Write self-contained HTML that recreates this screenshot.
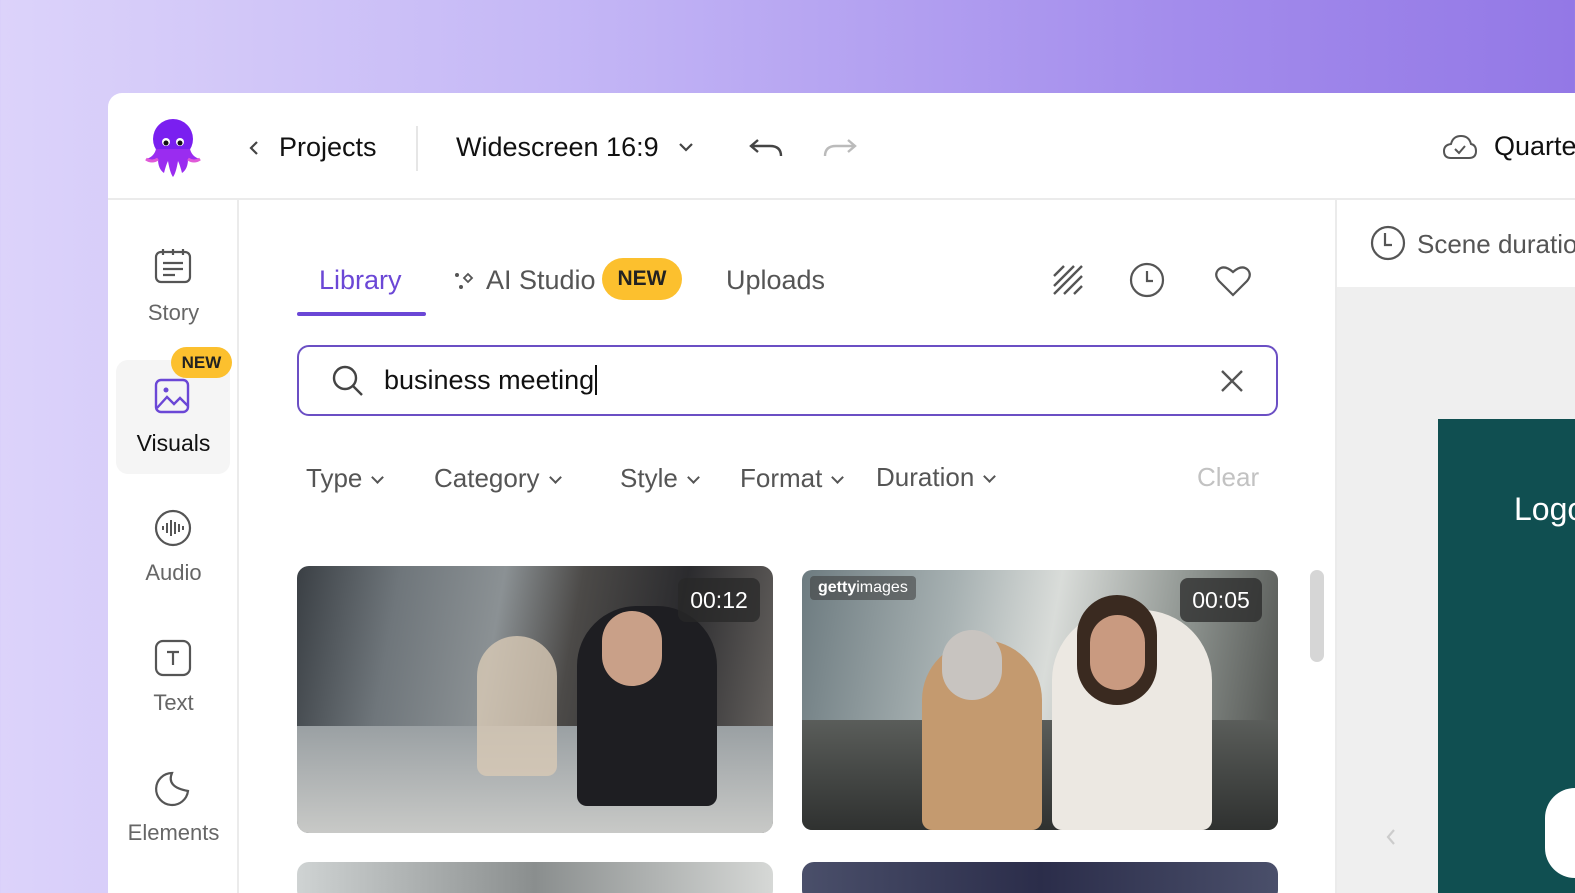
<!DOCTYPE html>
<html><head><style>
*{margin:0;padding:0;box-sizing:border-box}
body{width:1575px;height:880px;overflow:hidden;font-family:"Liberation Sans",sans-serif;background:linear-gradient(90deg,#dcd3fa 0%,#c5b8f6 35%,#a38cec 75%,#9378e6 100%);position:relative}
.win{position:absolute;left:108px;top:93px;width:1480px;height:800px;background:#fff;border-top-left-radius:14px;overflow:hidden}
.abs{position:absolute}
.t{position:absolute;white-space:nowrap}
.side{left:0;top:106px;width:131px;height:700px;border-right:2px solid #ebebeb}
.lbl{font-size:22px;color:#666;text-align:center;width:131px;left:0}
.chip{font-size:26px;color:#555}
.chev{display:inline-block;width:9px;height:9px;border-right:2px solid #555;border-bottom:2px solid #555;transform:rotate(45deg);margin-left:11px;position:relative;top:-5px}
</style></head><body>
<div class="win">
 <div class="abs" style="left:0;top:105px;width:1480px;height:2px;background:#ebebeb"></div>
 <svg class="abs" style="left:34px;top:22px" width="62" height="64" viewBox="0 0 62 64">
  <ellipse cx="31" cy="24" rx="20" ry="20" fill="#7a1ff0"/>
  <path d="M4 44 Q12 42 14 34 L48 34 Q50 42 58 44 Q50 48 46 44 Q46 54 40 58 Q38 50 36 46 Q34 58 31 62 Q28 58 26 46 Q24 50 22 58 Q16 54 16 44 Q12 48 4 44Z" fill="#9a2cf0"/>
  <path d="M4 44 Q10 48 16 44 M46 44 Q52 48 58 44" stroke="#e05ad8" stroke-width="3" fill="none"/>
  <circle cx="24" cy="27" r="4" fill="#fff"/><circle cx="38" cy="27" r="4" fill="#fff"/>
  <circle cx="24" cy="28" r="2.5" fill="#111"/><circle cx="38" cy="28" r="2.5" fill="#111"/>
 </svg>
 <svg class="abs" style="left:140px;top:47px" width="12" height="16"><path d="M9 2 L3 8 L9 14" stroke="#444" stroke-width="2.2" fill="none"/></svg>
 <div class="t" style="left:171px;top:39px;font-size:27px;color:#111">Projects</div>
 <div class="abs" style="left:308px;top:33px;width:2px;height:45px;background:#e6e6e6"></div>
 <div class="t" style="left:348px;top:39px;font-size:27px;color:#111">Widescreen 16:9</div>
 <svg class="abs" style="left:570px;top:49px" width="16" height="12"><path d="M2 2 L8 8 L14 2" stroke="#444" stroke-width="2.2" fill="none"/></svg>
 <svg class="abs" style="left:640px;top:43px" width="36" height="24"><path d="M10 4 L3 10 L10 16 M3 10 H22 Q33 10 33 20" stroke="#444" stroke-width="2.4" fill="none"/></svg>
 <svg class="abs" style="left:714px;top:43px" width="36" height="24"><path d="M26 4 L33 10 L26 16 M33 10 H14 Q3 10 3 20" stroke="#bbb" stroke-width="2.4" fill="none"/></svg>
 <svg class="abs" style="left:1334px;top:39px" width="36" height="30"><path d="M9 26 Q2 26 2 19 Q2 13 9 12 Q11 4 19 4 Q27 4 29 12 Q34 13 34 19 Q34 26 27 26Z" stroke="#555" stroke-width="2" fill="none"/><path d="M13 17 L17 21 L23 14" stroke="#555" stroke-width="2" fill="none"/></svg>
 <div class="t" style="left:1386px;top:38px;font-size:27px;color:#111">Quarterly</div>

 <div class="abs side"></div>
 <svg class="abs" style="left:46px;top:155px" width="38" height="36" viewBox="0 0 38 36"><rect x="2" y="4" width="34" height="30" rx="5" stroke="#555" stroke-width="2.2" fill="none"/><path d="M9 1v6M19 1v6M29 1v6M9 15h20M9 21h20M9 27h12" stroke="#555" stroke-width="2.2"/></svg>
 <div class="t lbl" style="top:207px">Story</div>
 <div class="abs" style="left:8px;top:267px;width:114px;height:114px;background:#f5f5f5;border-radius:12px"></div>
 <div class="abs" style="left:63px;top:254px;width:61px;height:31px;background:#fcc02e;border-radius:16px;font-size:17px;font-weight:bold;color:#222;text-align:center;line-height:31px">NEW</div>
 <svg class="abs" style="left:46px;top:285px" width="36" height="36"><rect x="2" y="2" width="32" height="32" rx="5" stroke="#6b47d6" stroke-width="2.4" fill="none"/><circle cx="12" cy="12" r="2.5" fill="#6b47d6"/><path d="M3 30 L13 19 L20 26 L26 20 L34 28" stroke="#6b47d6" stroke-width="2.4" fill="none"/></svg>
 <div class="t lbl" style="top:337px;color:#111;font-size:23px">Visuals</div>
 <svg class="abs" style="left:46px;top:416px" width="38" height="38"><circle cx="19" cy="19" r="17" stroke="#555" stroke-width="2.2" fill="none"/><path d="M9 17v4M13 14v10M17 11v16M21 13v12M25 15v8M29 17v4" stroke="#555" stroke-width="2"/></svg>
 <div class="t lbl" style="top:467px">Audio</div>
 <svg class="abs" style="left:46px;top:546px" width="38" height="38"><rect x="2" y="2" width="34" height="34" rx="7" stroke="#555" stroke-width="2.2" fill="none"/><path d="M13 13h12M19 13v13" stroke="#555" stroke-width="2.2"/></svg>
 <div class="t lbl" style="top:597px">Text</div>
 <svg class="abs" style="left:46px;top:676px" width="38" height="38"><path d="M34 22 A16 16 0 1 1 18 4 Q12 18 34 22Z" stroke="#555" stroke-width="2.2" fill="none"/></svg>
 <div class="t lbl" style="top:727px">Elements</div>

 <div class="t" style="left:211px;top:172px;font-size:27px;color:#6b47d6">Library</div>
 <div class="abs" style="left:189px;top:219px;width:129px;height:4px;background:#6b47d6;border-radius:2px"></div>
 <svg class="abs" style="left:345px;top:177px" width="22" height="22"><circle cx="4" cy="5" r="2" fill="#555"/><path d="M15 4 L19 8 L15 12 L11 8Z" stroke="#555" stroke-width="1.8" fill="none"/><circle cx="8" cy="17" r="2" fill="#555"/></svg>
 <div class="t" style="left:378px;top:172px;font-size:27px;color:#555">AI Studio</div>
 <div class="abs" style="left:494px;top:165px;width:80px;height:42px;background:#fcc02e;border-radius:21px;font-size:21px;font-weight:bold;color:#222;text-align:center;line-height:42px">NEW</div>
 <div class="t" style="left:618px;top:172px;font-size:27px;color:#555">Uploads</div>
 <svg class="abs" style="left:944px;top:171px" width="32" height="32"><path d="M2 12 L12 2 M2 22 L22 2 M2 30 L30 2 M12 30 L30 12 M22 30 L30 22" stroke="#555" stroke-width="2.4"/></svg>
 <svg class="abs" style="left:1021px;top:169px" width="36" height="36"><circle cx="18" cy="18" r="16" stroke="#555" stroke-width="2.2" fill="none"/><path d="M18 9v10h6" stroke="#555" stroke-width="2.2" fill="none"/></svg>
 <svg class="abs" style="left:1106px;top:171px" width="38" height="34"><path d="M19 31 L5 17 Q0 11 4 6 Q10 0 19 8 Q28 0 34 6 Q38 11 33 17Z" stroke="#555" stroke-width="2.2" fill="none"/></svg>

 <div class="abs" style="left:189px;top:252px;width:981px;height:71px;border:2px solid #6b4fc4;border-radius:12px"></div>
 <svg class="abs" style="left:224px;top:272px" width="32" height="32"><circle cx="13" cy="13" r="11" stroke="#444" stroke-width="2.4" fill="none"/><path d="M21 21 L30 30" stroke="#444" stroke-width="2.4"/></svg>
 <div class="t" style="left:276px;top:272px;font-size:27px;color:#111">business meeting<span style="border-left:2px solid #111;margin-left:1px"></span></div>
 <svg class="abs" style="left:1112px;top:276px" width="24" height="24"><path d="M2 2 L22 22 M22 2 L2 22" stroke="#555" stroke-width="2.4"/></svg>

 <div class="t chip" style="left:198px;top:370px">Type<span class="chev"></span></div>
 <div class="t chip" style="left:326px;top:370px">Category<span class="chev"></span></div>
 <div class="t chip" style="left:512px;top:370px">Style<span class="chev"></span></div>
 <div class="t chip" style="left:632px;top:370px">Format<span class="chev"></span></div>
 <div class="t chip" style="left:768px;top:369px">Duration<span class="chev"></span></div>
 <div class="t chip" style="left:1089px;top:369px;color:#c2c2c2">Clear</div>

 <div class="abs" style="left:189px;top:473px;width:476px;height:267px;border-radius:12px;overflow:hidden;background:linear-gradient(100deg,#3a3f44 0%,#6f767b 20%,#8b9194 40%,#4c4a48 55%,#2b2b2e 75%,#6e6a66 100%)">
  <div class="abs" style="left:0;top:160px;width:476px;height:107px;background:linear-gradient(180deg,#9aa0a3,#c8c9c7)"></div>
  <div class="abs" style="left:180px;top:70px;width:80px;height:140px;background:#d8c9b5;border-radius:40px 40px 10px 10px;opacity:.8"></div>
  <div class="abs" style="left:280px;top:40px;width:140px;height:200px;background:#1e1e22;border-radius:60px 60px 10px 10px"></div>
  <div class="abs" style="left:305px;top:45px;width:60px;height:75px;background:#c9a088;border-radius:30px"></div>
  <div class="abs" style="left:381px;top:12px;width:82px;height:44px;background:rgba(40,40,40,.75);border-radius:8px;color:#fff;font-size:23px;text-align:center;line-height:44px">00:12</div>
 </div>
 <div class="abs" style="left:694px;top:477px;width:476px;height:260px;border-radius:10px;overflow:hidden;background:linear-gradient(100deg,#6d7b80 0%,#a7b1b2 30%,#d9dcd9 50%,#8f9591 75%,#4a4c49 100%)">
  <div class="abs" style="left:0;top:150px;width:476px;height:110px;background:linear-gradient(180deg,#5a5d5a,#2f3130)"></div>
  <div class="abs" style="left:120px;top:70px;width:120px;height:190px;background:#c49a6f;border-radius:60px 60px 10px 10px"></div>
  <div class="abs" style="left:140px;top:60px;width:60px;height:70px;background:#c8c4c0;border-radius:30px"></div>
  <div class="abs" style="left:250px;top:40px;width:160px;height:220px;background:#ece8e2;border-radius:70px 70px 10px 10px"></div>
  <div class="abs" style="left:275px;top:25px;width:80px;height:110px;background:#3a2a20;border-radius:40px"></div>
  <div class="abs" style="left:288px;top:45px;width:55px;height:75px;background:#c99a80;border-radius:28px"></div>
  <div class="abs" style="left:8px;top:6px;padding:3px 8px;background:rgba(60,60,60,.55);border-radius:4px;color:#fff;font-size:16px;font-weight:bold">getty<span style="font-weight:normal">images</span></div>
  <div class="abs" style="left:378px;top:8px;width:82px;height:44px;background:rgba(40,40,40,.75);border-radius:8px;color:#fff;font-size:23px;text-align:center;line-height:44px">00:05</div>
 </div>
 <div class="abs" style="left:189px;top:769px;width:476px;height:40px;border-radius:12px;background:linear-gradient(90deg,#cfd3d3,#8a8e8e,#d6d8d6)"></div>
 <div class="abs" style="left:694px;top:769px;width:476px;height:40px;border-radius:12px;background:linear-gradient(90deg,#4a4f6a,#2b2d4a,#4a4f6a)"></div>
 <div class="abs" style="left:1202px;top:477px;width:14px;height:92px;background:#d6d6d6;border-radius:7px"></div>

 <div class="abs" style="left:1227px;top:107px;width:2px;height:700px;background:#ebebeb"></div>
 <div class="abs" style="left:1229px;top:194px;width:260px;height:620px;background:#efefef"></div>
 <svg class="abs" style="left:1261px;top:131px" width="38" height="38"><circle cx="19" cy="19" r="16" stroke="#555" stroke-width="2.2" fill="none"/><path d="M16 9v12h7" stroke="#555" stroke-width="2.2" fill="none"/></svg>
 <div class="t" style="left:1309px;top:136px;font-size:26px;color:#555">Scene duration</div>
 <div class="abs" style="left:1330px;top:326px;width:160px;height:500px;background:#104f51"></div>
 <div class="t" style="left:1406px;top:398px;font-size:32px;color:#fff">Logo</div>
 <svg class="abs" style="left:1276px;top:734px" width="14" height="20"><path d="M10 3 L4 10 L10 17" stroke="#ccc" stroke-width="2.2" fill="none"/></svg>
 <div class="abs" style="left:1437px;top:695px;width:60px;height:90px;background:#fff;border-radius:30px"></div>
</div>
</body></html>
